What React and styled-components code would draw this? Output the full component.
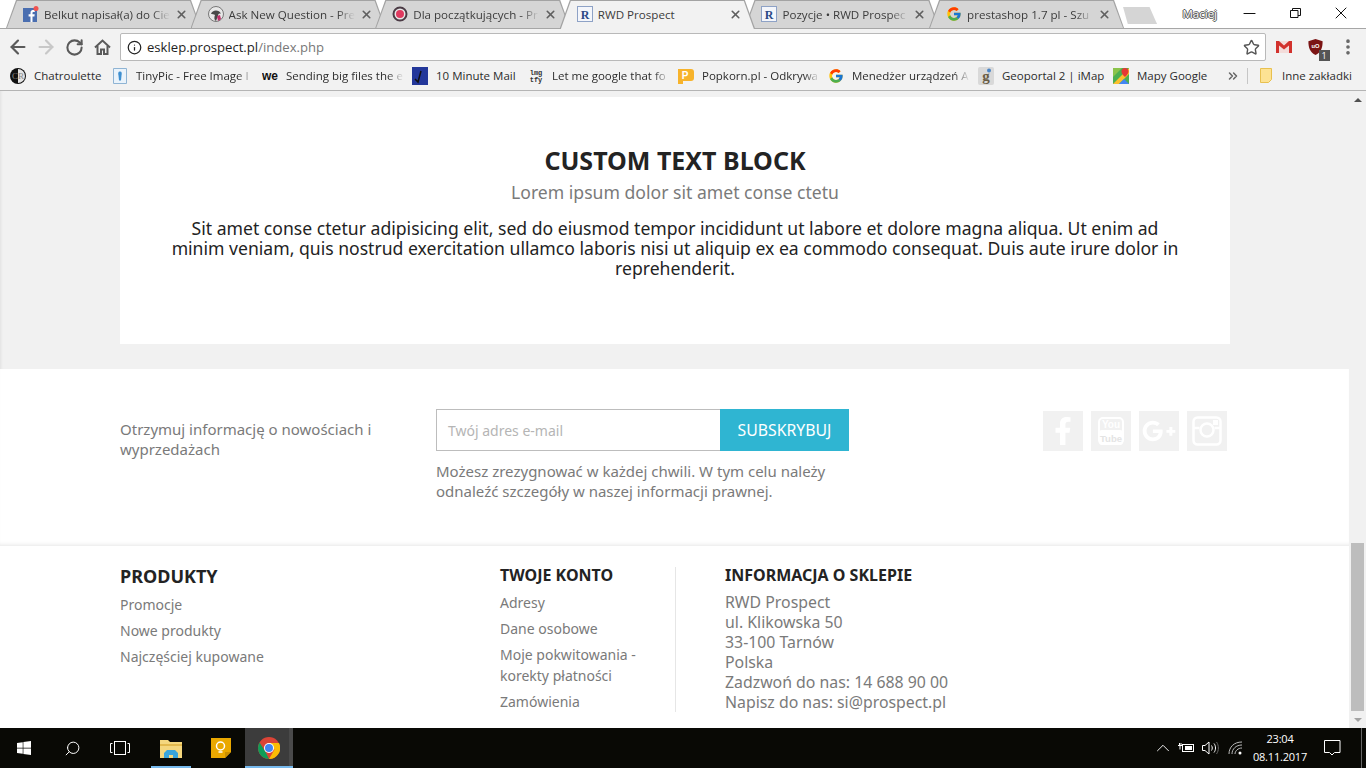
import React from 'react'
import styled, { createGlobalStyle } from 'styled-components'
import { ArrowLeft, ArrowRight, RotateCw, Info, Star, X, Minus, Search, ChevronUp, ChevronsRight, MoreVertical } from 'lucide-react'
import { FaFacebookF, FaGooglePlusG, FaWindows } from 'react-icons/fa'
import { FcGoogle } from 'react-icons/fc'

const GlobalStyle = createGlobalStyle`
  html, body { margin: 0; padding: 0; overflow: hidden; background: #f1f1f1; }
  * { box-sizing: border-box; }
`

const uiFont = `"Open Sans", "Noto Sans", sans-serif`
const pageFont = `"Noto Sans", "Open Sans", sans-serif`

const Screen = styled.div`
  width: 1366px;
  height: 768px;
  display: flex;
  flex-direction: column;
  overflow: hidden;
`

/* ---- browser chrome ---- */
const TabStrip = styled.div`
  height: 29px;
  flex: none;
  display: flex;
  align-items: flex-start;
  padding-left: 6px;
  background: #fff;
  border-bottom: 1px solid #a6a6a6;
`
const Tab = styled.div`
  position: relative;
  width: 195px;
  height: 28px;
  margin-right: -10.4px;
  flex: none;
  display: flex;
  align-items: center;
  gap: 5px;
  padding: 0 13px 0 17px;
  z-index: ${p => (p.$active ? 2 : 1)};
  font: 11.6px ${uiFont};
  color: #3c3c3c;
  &::before, &::after {
    content: '';
    position: absolute;
    clip-path: polygon(0 100%, 10px 0, calc(100% - 10px) 0, 100% 100%);
    z-index: -1;
  }
  &::before { inset: 0; background: #a3a3a3; }
  &::after {
    inset: 1px 1px ${p => (p.$active ? '-1px' : '0')} 1px;
    background: ${p => (p.$active ? '#f2f2f2' : '#d5d5d5')};
  }
`
const TabTitle = styled.span`
  flex: 1;
  min-width: 0;
  white-space: nowrap;
  overflow: hidden;
  mask-image: ${p => (p.$fade ? 'linear-gradient(to right, #000 86%, transparent)' : 'none')};
`
const TabClose = styled(X)`
  flex: none;
  width: 13px;
  height: 13px;
  color: #5f5f5f;
  stroke-width: 3;
`
const NewTab = styled.div`
  width: 34px;
  height: 17px;
  margin: 7px 0 0 9.400px;
  flex: none;
  background: #d5d5d5;
  clip-path: polygon(0 0, 78% 0, 100% 100%, 14% 100%);
`
const WindowArea = styled.div`
  flex: 1;
  display: flex;
  justify-content: flex-end;
  align-items: flex-start;
  padding-right: 2px;
`
const UserName = styled.span`
  font: 11.500px ${uiFont};
  color: #fff;
  margin: 6px 9px 0 0;
  text-shadow: 1px 0 0 #555, -1px 0 0 #555, 0 1px 0 #555, 0 -1px 0 #555;
`
const WindowButton = styled.div`
  width: 46px;
  height: 26px;
  display: flex;
  align-items: center;
  justify-content: center;
  color: #111;
`

const Toolbar = styled.div`
  height: 33px;
  flex: none;
  display: flex;
  align-items: center;
  background: #f2f2f2;
  padding: 3px 0 0 4px;
`
const NavButton = styled.div`
  width: 28px;
  height: 24px;
  flex: none;
  display: flex;
  align-items: center;
  justify-content: center;
  color: ${p => (p.$disabled ? '#c8c8c8' : '#5a5a5a')};
`
const Omnibox = styled.div`
  width: 1146px;
  height: 28px;
  margin-left: 4px;
  flex: none;
  display: flex;
  align-items: center;
  gap: 5px;
  padding: 0 5px 0 6px;
  background: #fff;
  border: 1px solid #b9b9b9;
  border-radius: 2px;
  font: 13.100px ${uiFont};
  color: #222;
`
const UrlPath = styled.span`
  color: #777;
`
const Url = styled.span`
  flex: 1;
`
const Extensions = styled.div`
  flex: 1;
  display: flex;
  align-items: center;
  justify-content: space-between;
  padding: 0 8px 0 10px;
`
const ShieldWrap = styled.div`
  position: relative;
  width: 15px;
  height: 16px;
  display: flex;
`
const Badge = styled.span`
  position: absolute;
  right: -7px;
  bottom: -6px;
  width: 11px;
  height: 11px;
  background: #555;
  color: #fff;
  font: 9px/11px ${uiFont};
  text-align: center;
`

const BookmarkBar = styled.div`
  height: 29px;
  flex: none;
  display: flex;
  align-items: center;
  padding: 0 0 1px 10px;
  background: #f2f2f2;
  border-bottom: 1px solid #b4b4b4;
  font: 11.500px ${uiFont};
  color: #2c2c2c;
`
const Bookmark = styled.div`
  width: ${p => p.$width}px;
  flex: none;
  display: flex;
  align-items: center;
  gap: 8px;
  padding-right: ${p => (p.$fade ? 8 : 0)}px;
`
const BookmarkTitle = styled.span`
  flex: 1;
  min-width: 0;
  white-space: nowrap;
  overflow: hidden;
  mask-image: ${p => (p.$fade ? 'linear-gradient(to right, #000 86%, transparent)' : 'none')};
`
const MoreBookmarks = styled(ChevronsRight)`
  flex: none;
  margin-left: -4px;
  color: #666;
`
const BarDivider = styled.div`
  width: 1px;
  height: 16px;
  margin: 0 12px 0 7px;
  background: #c6c6c6;
`
const FolderMark = styled(Bookmark)`
  gap: 10px;
`

/* ---- page ---- */
const Viewport = styled.div`
  flex: 1;
  min-height: 0;
  display: flex;
`
const Page = styled.div`
  flex: 1;
  min-width: 0;
  display: flex;
  flex-direction: column;
  background: #f1f1f1;
  font-family: ${pageFont};
  color: #7a7a7a;
`
const GreyBand = styled.div`
  height: 278px;
  flex: none;
  padding: 6px 119px 0 120px;
  box-shadow: inset 3px 0 3px -2px rgba(0, 0, 0, .07);
`
const TextBlock = styled.section`
  height: 247px;
  padding: 48px 45px 0;
  background: #fff;
  text-align: center;
`
const BlockTitle = styled.h1`
  margin: 0;
  font-size: 25px;
  line-height: 30px;
  font-weight: 700;
  color: #232323;
`
const BlockSubtitle = styled.h2`
  margin: 5px 0 0;
  font-size: 17.600px;
  line-height: 24px;
  font-weight: 400;
  color: #7a7a7a;
`
const BlockBody = styled.p`
  margin: 14px 0 0;
  font-size: 17.600px;
  line-height: 20px;
  color: #232323;
`
const NewsletterBand = styled.div`
  height: 177px;
  flex: none;
  display: flex;
  padding: 40px 122px 0 120px;
  background: #fff;
  box-shadow: inset 0 -4px 4px -3px rgba(0, 0, 0, .1);
`
const NewsLabel = styled.p`
  width: 316px;
  margin: 10px 0 0;
  flex: none;
  font-size: 15px;
  line-height: 20px;
`
const NewsForm = styled.div`
  width: 413px;
  flex: none;
`
const FormRow = styled.div`
  display: flex;
  height: 42px;
`
const EmailBox = styled.div`
  flex: 1;
  padding-left: 11px;
  background: #fff;
  border: 1px solid #bdbdbd;
  border-right: 0;
  font-size: 14px;
  line-height: 41px;
  color: #b5b5b5;
`
const SubscribeButton = styled.div`
  width: 129px;
  background: #2fb5d2;
  color: #fff;
  font-size: 15.800px;
  line-height: 42px;
  text-align: center;
`
const FormNote = styled.p`
  margin: 10px 0 0;
  font-size: 15px;
  line-height: 20px;
`
const SocialRow = styled.div`
  margin: 2px 0 0 auto;
  display: flex;
  gap: 8px;
`
const SocialIcon = styled.div`
  width: 40px;
  height: 40px;
  display: flex;
  align-items: center;
  justify-content: center;
  background: #f1f1f1;
  color: #fff;
`
const FooterBand = styled.footer`
  flex: 1;
  display: flex;
  padding: 21px 0 0 120px;
  background: #fff;
`
const ProductsColumn = styled.div`
  width: 380px;
  flex: none;
`
const AccountColumn = styled.div`
  width: 176px;
  height: 145px;
  flex: none;
  border-right: 1px solid #e6e6e6;
`
const ShopColumn = styled.div`
  padding-left: 49px;
`
const ColumnTitle = styled.h3`
  margin: 0 0 ${p => (p.$large ? 9 : 8)}px;
  font-size: ${p => (p.$large ? 18 : 16)}px;
  line-height: ${p => (p.$large ? 18 : 17)}px;
  font-weight: 700;
  color: #232323;
`
const LinkItem = styled.div`
  font-size: 14px;
  line-height: 21px;
  margin-bottom: 5px;
  color: #7a7a7a;
`
const ShopLine = styled.div`
  font-size: 15.850px;
  line-height: 20px;
  color: #7a7a7a;
`
const Scrollbar = styled.div`
  width: 17px;
  flex: none;
  display: flex;
  flex-direction: column;
  justify-content: space-between;
  background: #f1f1f1;
  position: relative;
`
const ScrollArrow = styled.div`
  height: 17px;
  display: flex;
  align-items: center;
  justify-content: center;
  &::before {
    content: '';
    border-left: 4px solid transparent;
    border-right: 4px solid transparent;
    ${p => (p.$down ? 'border-top: 4px solid #a3a3a3;' : 'border-bottom: 4px solid #505050;')}
  }
`
const ScrollThumb = styled.div`
  position: absolute;
  left: 2px;
  right: 2px;
  top: 452px;
  height: 168px;
  background: #bdbdbd;
`

/* ---- taskbar ---- */
const Taskbar = styled.div`
  height: 40px;
  flex: none;
  display: flex;
  align-items: stretch;
  background: #090905;
  color: #fff;
`
const TaskButton = styled.div`
  width: ${p => p.$width || 48}px;
  flex: none;
  display: flex;
  align-items: center;
  justify-content: center;
  position: relative;
  background: ${p => (p.$active ? 'linear-gradient(to right, #3c3c3c 44px, #4a4a4a 44px)' : 'transparent')};
  ${p => p.$open && `
    &::after {
      content: '';
      position: absolute;
      bottom: 0;
      left: ${p.$active ? 0 : 7}px;
      right: ${p.$active ? 0 : 6}px;
      height: 2px;
      background: #76b9ed;
    }
  `}
`
const SearchGlyph = styled(Search)`
  transform: scaleX(-1);
`
const Tray = styled.div`
  margin-left: auto;
  display: flex;
  align-items: center;
  padding-right: 4px;
`
const TrayIcon = styled.div`
  width: ${p => p.$width || 24}px;
  display: flex;
  justify-content: center;
`
const Clock = styled.div`
  width: 58px;
  margin-left: 2px;
  text-align: center;
  font: 11px/18px ${uiFont};
  letter-spacing: -.2px;
`
const ActionCenter = styled.div`
  width: 53px;
  height: 100%;
  display: flex;
  align-items: center;
  justify-content: center;
  padding-right: 5px;
  border-right: 1px solid #666;
`

/* ---- icons ---- */
const FbFavicon = () => (
  <svg width="16" height="16" viewBox="0 0 16 16">
    <rect width="14" height="14" y="2" fill="#4a6eb0" />
    <path d="M9.500 16V10.500h1.900l.3-2.200H9.500V7c0-.7.2-1.100 1.100-1.100h1.200V4c-1.800-.2-4.300-.3-4.300 2.700v1.600H5.600v2.200h1.900V16z" fill="#fff" />
    <circle cx="13" cy="2.500" r="2.500" fill="#f0524f" />
  </svg>
)
const BirdFavicon = () => (
  <svg width="16" height="16" viewBox="0 0 16 16">
    <circle cx="8" cy="8" r="7.500" fill="#e8e8e8" stroke="#777" />
    <path d="M3 8c1-4 8-5 10 0-2-1-3 0-3 2l-2 5c-2-1-2-4-1-6-1-1-3-1-4-1z" fill="#4a4a4a" />
    <path d="M9 10l3-1 1 4-3 2z" fill="#c0306a" />
  </svg>
)
const RingFavicon = () => (
  <svg width="16" height="16" viewBox="0 0 16 16">
    <circle cx="8" cy="8" r="6.500" fill="#e8e8e8" stroke="#4b3b45" strokeWidth="2" />
    <circle cx="8" cy="8" r="4" fill="#e0395f" />
  </svg>
)
const RwdFavicon = () => (
  <svg width="16" height="16" viewBox="0 0 16 16">
    <rect x=".5" y=".5" width="15" height="15" fill="#f4f6fb" stroke="#8ea2c6" />
    <text x="8" y="12.500" textAnchor="middle" fontFamily="Liberation Serif, serif" fontSize="12" fontWeight="700" fill="#2b4a86">R</text>
  </svg>
)
const MinuteMail = () => (
  <svg width="16" height="18" viewBox="0 0 16 18">
    <rect width="16" height="18" fill="#23379a" />
    <path d="M3 12l3 3 3-11" fill="none" stroke="#111" strokeWidth="1.500" />
  </svg>
)
const ImgFlip = () => (
  <svg width="16" height="16" viewBox="0 0 16 16">
    <text x="8" y="7" textAnchor="middle" fontFamily="Liberation Mono, monospace" fontSize="7" fontWeight="700" fill="#333">lmg</text>
    <text x="8" y="14" textAnchor="middle" fontFamily="Liberation Mono, monospace" fontSize="7" fontWeight="700" fill="#333">tfy</text>
  </svg>
)
const ChatIcon = () => (
  <svg width="16" height="16" viewBox="0 0 16 16">
    <circle cx="8" cy="8" r="8" fill="#111" />
    <path d="M8 1a7 7 0 0 1 0 14z" fill="#e4e4e4" />
    <text x="8" y="11" textAnchor="middle" fontFamily="Liberation Serif, serif" fontSize="9" fill="#888">CR</text>
  </svg>
)
const TinyPic = () => (
  <svg width="16" height="16" viewBox="0 0 16 16">
    <path d="M1.500.5h13v15h-13z" fill="#eaf3fb" stroke="#8fb4d4" />
    <path d="M8 3.500c2 0 2 2 1.500 4l-.5 5H7l-.5-5C6 5.500 6 3.500 8 3.500z" fill="#3e8fd0" />
  </svg>
)
const WeIcon = () => (
  <svg width="16" height="16" viewBox="0 0 16 16">
    <text x="8" y="12" textAnchor="middle" fontFamily="Liberation Sans, sans-serif" fontSize="12" fontWeight="700" fill="#111">we</text>
  </svg>
)
const PopkornIcon = () => (
  <svg width="16" height="16" viewBox="0 0 16 16">
    <path d="M0 1h13a3 3 0 0 1 3 3v6a3 3 0 0 1-3 3H5v3H0z" fill="#f7b32b" />
    <text x="7" y="11" textAnchor="middle" fontFamily="Liberation Sans, sans-serif" fontSize="10" fontWeight="700" fill="#fff">P</text>
  </svg>
)
const GeoIcon = () => (
  <svg width="16" height="18" viewBox="0 0 16 18">
    <rect width="16" height="18" rx="2" fill="#d9d9d9" />
    <text x="8" y="14" textAnchor="middle" fontFamily="Liberation Serif, serif" fontSize="15" fontWeight="700" fill="#6a5d45">g</text>
    <circle cx="11" cy="3.500" r="2" fill="#4c86c6" />
  </svg>
)
const MapsIcon = () => (
  <svg width="16" height="16" viewBox="0 0 16 16">
    <rect width="16" height="16" fill="#4caf50" />
    <path d="M0 16L16 0v6L6 16z" fill="#fbc02d" />
    <path d="M6 16l5-5 5 5z" fill="#4285f4" />
    <path d="M0 0h9L0 9z" fill="#8bc34a" />
    <path d="M12 0a3.500 3.500 0 0 1 3.500 3.500C15.500 6 12 9 12 9S8.500 6 8.500 3.500A3.500 3.500 0 0 1 12 0z" fill="#e53935" />
  </svg>
)
const FolderIcon = () => (
  <svg width="12" height="15" viewBox="0 0 12 15">
    <path d="M.5.500h11v11l-3 3h-8z" fill="#fde293" stroke="#e8c04f" />
  </svg>
)
const GmailIcon = () => (
  <svg width="16" height="12" viewBox="0 0 16 12">
    <rect width="16" height="12" fill="#f3dcda" />
    <path d="M0 0h3l5 4.500L13 0h3v12h-3V4.500L8 8.500 3 4.500V12H0z" fill="#d2322d" />
  </svg>
)
const UblockIcon = () => (
  <svg width="15" height="16" viewBox="0 0 16 18">
    <path d="M8 0l8 2.500c0 8-2 12.500-8 15.500C2 15 0 10.500 0 2.500z" fill="#7b1414" />
    <text x="8" y="10" textAnchor="middle" fontFamily="Liberation Sans, sans-serif" fontSize="6.500" fontWeight="700" fill="#fff">uO</text>
  </svg>
)
const HomeIcon = () => (
  <svg width="17" height="16" viewBox="0 0 17 16" fill="none" stroke="currentColor" strokeWidth="2">
    <path d="M1 8.500L8.500 1.500 16 8.500" />
    <path d="M3.500 7v8h3.500v-4.500h3V15h3.500V7" />
  </svg>
)
const RestoreIcon = () => (
  <svg width="11" height="10" viewBox="0 0 11 10" fill="none" stroke="#111">
    <path d="M.5 2.500h7.500v7H.5zM2.500 2.500v-2h8v7H8" />
  </svg>
)
const YoutubeIcon = () => (
  <svg width="28" height="30" viewBox="0 0 28 30">
    <rect x="2" y="2" width="24" height="26" rx="4" fill="none" stroke="#fff" strokeWidth="2" />
    <text x="14" y="12" textAnchor="middle" fontFamily="Liberation Sans, sans-serif" fontSize="10" fontWeight="700" fill="#fff">You</text>
    <rect x="2" y="14" width="24" height="15" rx="3" fill="#fff" />
    <text x="14" y="26" textAnchor="middle" fontFamily="Liberation Sans, sans-serif" fontSize="9.500" fontWeight="700" fill="#e4e4e4">Tube</text>
  </svg>
)
const InstagramIcon = () => (
  <svg width="30" height="30" viewBox="0 0 30 30" fill="none" stroke="#fff" strokeWidth="2.500">
    <rect x="1.500" y="1.500" width="27" height="27" rx="4" />
    <path d="M1.500 12h6M22.500 12h6" />
    <circle cx="15" cy="14" r="6.500" />
    <rect x="21" y="4" width="5" height="5" fill="#fff" stroke="none" />
  </svg>
)
const ExplorerIcon = () => (
  <svg width="22" height="19" viewBox="0 0 22 19">
    <path d="M0 1h8l2 2h12v16H0z" fill="#f5d77e" />
    <path d="M0 5h22v2H0z" fill="#e3b94e" />
    <path d="M4 19v-5l3-3h8l3 3v5h-5v-3H9v3z" fill="#3aa5dc" />
  </svg>
)
const KeepIcon = () => (
  <svg width="20" height="20" viewBox="0 0 20 20">
    <path d="M0 0h20v14l-6 6H0z" fill="#eaa800" />
    <path d="M14 20v-6h6z" fill="#c98e00" />
    <circle cx="9.500" cy="8" r="4" fill="none" stroke="#fff" strokeWidth="1.500" />
    <path d="M7.500 14h4" stroke="#fff" strokeWidth="1.500" />
  </svg>
)
const ChromeIcon = () => (
  <svg width="22" height="22" viewBox="0 0 22 22">
    <circle cx="11" cy="11" r="11" fill="#db4437" />
    <path d="M11 22A11 11 0 0 1 1.500 5.500L7 14z" fill="#0f9d58" />
    <path d="M11 22l5.500-9.500L11 6h10a11 11 0 0 1-10 16z" fill="#fbbc05" />
    <circle cx="11" cy="11" r="5" fill="#fff" />
    <circle cx="11" cy="11" r="4" fill="#4285f4" />
  </svg>
)
const TaskViewIcon = () => (
  <svg width="20" height="14" viewBox="0 0 20 14" fill="none" stroke="#fff">
    <rect x="4.500" y=".5" width="11" height="13" />
    <path d="M2.500 2.500H.5v9h2M17.500 2.500h2v9h-2" />
  </svg>
)
const BatteryIcon = () => (
  <svg width="16" height="12" viewBox="0 0 16 12" fill="none" stroke="#fff">
    <rect x="4.500" y="2.500" width="11" height="7" />
    <rect x="7" y="4" width="7" height="4" fill="#fff" stroke="none" />
    <path d="M0 3.500h4M1.500 1v2M3 1v2M2 3.500v4" />
  </svg>
)
const VolumeIcon = () => (
  <svg width="17" height="14" viewBox="0 0 17 14" fill="none" stroke="#fff">
    <path d="M.5 4.500h2.500L7 1v12L3 9.500H.5z" />
    <path d="M9.500 4.500c1 1.500 1 3.500 0 5M12 2.500c2 2.500 2 6.500 0 9" />
    <path d="M14.500 1c2.500 3.500 2.500 8.500 0 12" stroke="#666" />
  </svg>
)
const WifiIcon = () => (
  <svg width="15" height="14" viewBox="0 0 15 14" fill="none" stroke="#fff">
    <path d="M1 13C1 6 6 1 14 1M4 13c0-5 4-9 10-9M7 13c0-3 3-6 7-6" stroke="#bbb" />
    <circle cx="12" cy="12" r="1.500" fill="#fff" stroke="none" />
  </svg>
)
const NotifyIcon = () => (
  <svg width="17" height="16" viewBox="0 0 17 16" fill="none" stroke="#fff">
    <path d="M.5.500h15.500v12h-5.500l-2.500 2.500-2.500-2.500H.5z" />
  </svg>
)

const tabs = [
  { title: 'Belkut napisał(a) do Cie', icon: <FbFavicon />, fade: true },
  { title: 'Ask New Question - Pre', icon: <BirdFavicon />, fade: true },
  { title: 'Dla początkujących - Pr', icon: <RingFavicon />, fade: true },
  { title: 'RWD Prospect', icon: <RwdFavicon />, active: true },
  { title: 'Pozycje • RWD Prospec', icon: <RwdFavicon />, fade: true },
  { title: 'prestashop 1.7 pl - Szu', icon: <FcGoogle size={16} />, fade: true },
]

const bookmarks = [
  { title: 'Chatroulette', icon: <ChatIcon />, width: 102 },
  { title: 'TinyPic - Free Image I', icon: <TinyPic />, width: 150, fade: true },
  { title: 'Sending big files the e', icon: <WeIcon />, width: 150, fade: true },
  { title: '10 Minute Mail', icon: <MinuteMail />, width: 116 },
  { title: 'Let me google that fo', icon: <ImgFlip />, width: 150, fade: true },
  { title: 'Popkorn.pl - Odkrywa', icon: <PopkornIcon />, width: 150, fade: true },
  { title: 'Menedżer urządzeń A', icon: <FcGoogle size={16} />, width: 150, fade: true },
  { title: 'Geoportal 2 | iMap', icon: <GeoIcon />, width: 135 },
  { title: 'Mapy Google', icon: <MapsIcon />, width: 117 },
]

function App() {
  return (
    <Screen>
      <GlobalStyle />
      <TabStrip>
        {tabs.map(t => (
          <Tab key={t.title} $active={t.active}>
            {t.icon}
            <TabTitle $fade={t.fade}>{t.title}</TabTitle>
            <TabClose />
          </Tab>
        ))}
        <NewTab />
        <WindowArea>
          <UserName>Maciej</UserName>
          <WindowButton><Minus size={19} strokeWidth={1.300} /></WindowButton>
          <WindowButton><RestoreIcon /></WindowButton>
          <WindowButton><X size={20} strokeWidth={1.200} /></WindowButton>
        </WindowArea>
      </TabStrip>
      <Toolbar>
        <NavButton><ArrowLeft size={22} strokeWidth={2.400} /></NavButton>
        <NavButton $disabled><ArrowRight size={22} strokeWidth={2.400} /></NavButton>
        <NavButton><RotateCw size={19} strokeWidth={2.600} /></NavButton>
        <NavButton><HomeIcon /></NavButton>
        <Omnibox>
          <Info size={15} strokeWidth={2} />
          <Url>esklep.prospect.pl<UrlPath>/index.php</UrlPath></Url>
          <Star size={17} strokeWidth={2} color="#555" />
        </Omnibox>
        <Extensions>
          <GmailIcon />
          <ShieldWrap><UblockIcon /><Badge>1</Badge></ShieldWrap>
          <MoreVertical size={20} strokeWidth={2.400} color="#666" />
        </Extensions>
      </Toolbar>
      <BookmarkBar>
        {bookmarks.map(b => (
          <Bookmark key={b.title} $width={b.width} $fade={b.fade}>
            {b.icon}
            <BookmarkTitle $fade={b.fade}>{b.title}</BookmarkTitle>
          </Bookmark>
        ))}
        <MoreBookmarks size={14} strokeWidth={2.600} />
        <BarDivider />
        <FolderMark $width={98}>
          <FolderIcon />
          <BookmarkTitle>Inne zakładki</BookmarkTitle>
        </FolderMark>
      </BookmarkBar>

      <Viewport>
        <Page>
          <GreyBand>
            <TextBlock>
              <BlockTitle>CUSTOM TEXT BLOCK</BlockTitle>
              <BlockSubtitle>Lorem ipsum dolor sit amet conse ctetu</BlockSubtitle>
              <BlockBody>
                Sit amet conse ctetur adipisicing elit, sed do eiusmod tempor incididunt ut labore et dolore magna aliqua. Ut enim ad minim veniam, quis nostrud exercitation ullamco laboris nisi ut aliquip ex ea commodo consequat. Duis aute irure dolor in reprehenderit.
              </BlockBody>
            </TextBlock>
          </GreyBand>
          <NewsletterBand>
            <NewsLabel>Otrzymuj informację o nowościach i wyprzedażach</NewsLabel>
            <NewsForm>
              <FormRow>
                <EmailBox>Twój adres e-mail</EmailBox>
                <SubscribeButton>SUBSKRYBUJ</SubscribeButton>
              </FormRow>
              <FormNote>Możesz zrezygnować w każdej chwili. W tym celu należy odnaleźć szczegóły w naszej informacji prawnej.</FormNote>
            </NewsForm>
            <SocialRow>
              <SocialIcon><FaFacebookF size={28} /></SocialIcon>
              <SocialIcon><YoutubeIcon /></SocialIcon>
              <SocialIcon><FaGooglePlusG size={34} /></SocialIcon>
              <SocialIcon><InstagramIcon /></SocialIcon>
            </SocialRow>
          </NewsletterBand>
          <FooterBand>
            <ProductsColumn>
              <ColumnTitle $large>PRODUKTY</ColumnTitle>
              <LinkItem>Promocje</LinkItem>
              <LinkItem>Nowe produkty</LinkItem>
              <LinkItem>Najczęściej kupowane</LinkItem>
            </ProductsColumn>
            <AccountColumn>
              <ColumnTitle>TWOJE KONTO</ColumnTitle>
              <LinkItem>Adresy</LinkItem>
              <LinkItem>Dane osobowe</LinkItem>
              <LinkItem>Moje pokwitowania -<br />korekty płatności</LinkItem>
              <LinkItem>Zamówienia</LinkItem>
            </AccountColumn>
            <ShopColumn>
              <ColumnTitle>INFORMACJA O SKLEPIE</ColumnTitle>
              <ShopLine>RWD Prospect</ShopLine>
              <ShopLine>ul. Klikowska 50</ShopLine>
              <ShopLine>33-100 Tarnów</ShopLine>
              <ShopLine>Polska</ShopLine>
              <ShopLine>Zadzwoń do nas: 14 688 90 00</ShopLine>
              <ShopLine>Napisz do nas: si@prospect.pl</ShopLine>
            </ShopColumn>
          </FooterBand>
        </Page>
        <Scrollbar>
          <ScrollArrow />
          <ScrollThumb />
          <ScrollArrow $down />
        </Scrollbar>
      </Viewport>

      <Taskbar>
        <TaskButton><FaWindows size={16} /></TaskButton>
        <TaskButton><SearchGlyph size={17} strokeWidth={1.400} /></TaskButton>
        <TaskButton><TaskViewIcon /></TaskButton>
        <TaskButton $open $width={53}><ExplorerIcon /></TaskButton>
        <TaskButton><KeepIcon /></TaskButton>
        <TaskButton $open $active><ChromeIcon /></TaskButton>
        <Tray>
          <TrayIcon $width={22}><ChevronUp size={24} strokeWidth={1} /></TrayIcon>
          <TrayIcon><BatteryIcon /></TrayIcon>
          <TrayIcon><VolumeIcon /></TrayIcon>
          <TrayIcon $width={27}><WifiIcon /></TrayIcon>
          <Clock>23:04<br />08.11.2017</Clock>
          <ActionCenter><NotifyIcon /></ActionCenter>
        </Tray>
      </Taskbar>
    </Screen>
  )
}

export default App
